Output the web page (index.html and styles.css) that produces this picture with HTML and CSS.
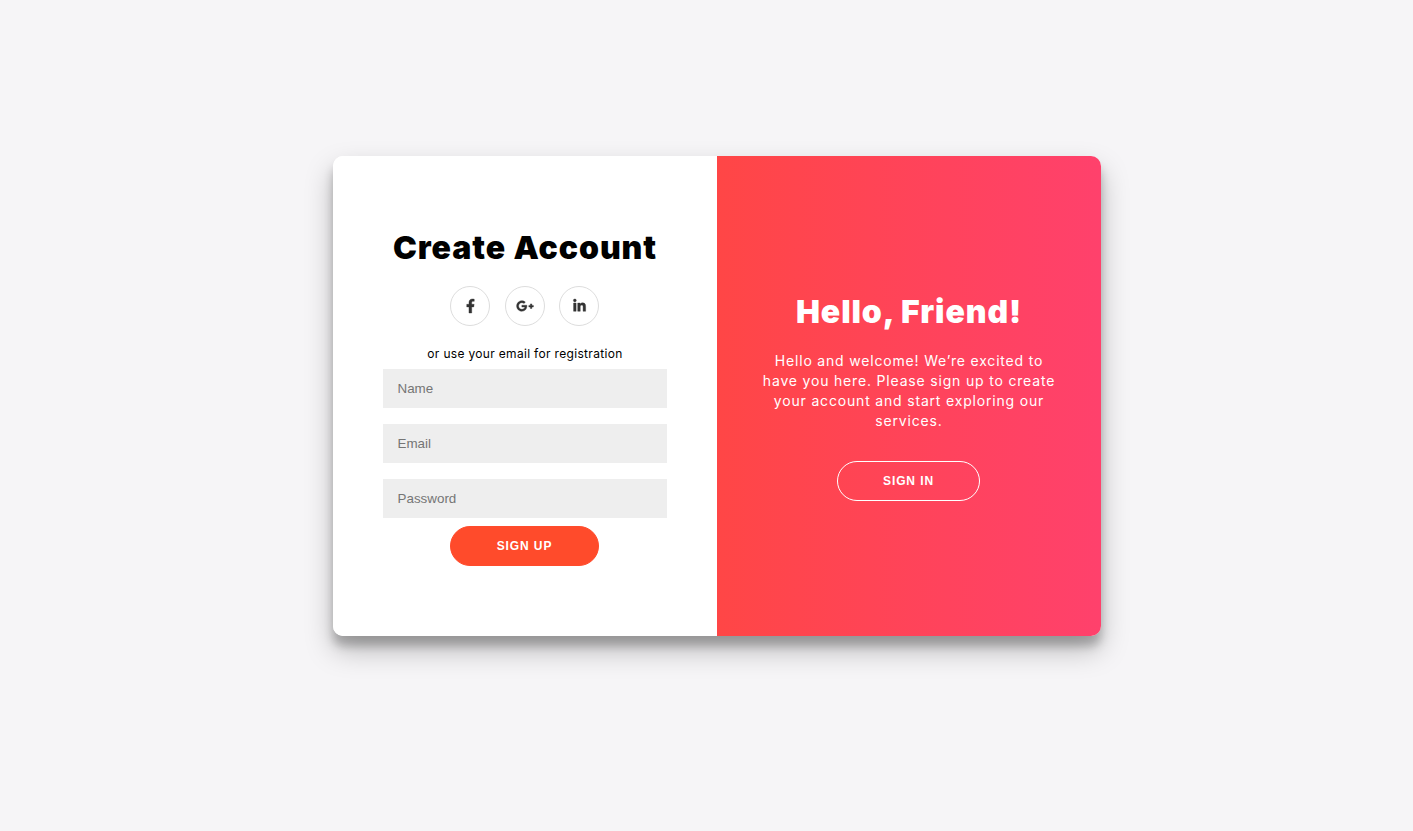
FILE: index.html
```html
<!DOCTYPE html>
<html lang="en">
<head>
<meta charset="utf-8">
<title>Create Account</title>
<link rel="stylesheet" href="styles.css">
</head>
<body>
<main class="card">
  <form class="panel form-panel">
    <h1 class="title title-dark">Create Account</h1>
    <div class="social">
      <a class="social-link" href="#" aria-label="Facebook">
        <svg class="icon-f" viewBox="0 0 320 512"><path d="M279.14 288l14.22-92.66h-88.91v-60.13c0-25.35 12.42-50.06 52.24-50.06h40.42V6.26S260.43 0 225.36 0c-73.22 0-121.08 44.38-121.08 124.72v70.62H22.89V288h81.39v224h100.17V288z"/></svg>
      </a>
      <a class="social-link" href="#" aria-label="Google Plus">
        <svg class="icon-g" viewBox="0 0 640 512"><path d="M386.061 228.496c1.834 9.692 3.143 19.384 3.143 31.956C389.204 370.205 315.599 448 204.8 448c-106.084 0-192-85.915-192-192s85.916-192 192-192c51.864 0 95.083 18.859 128.611 50.292l-52.126 50.03c-14.145-13.621-39.028-29.599-76.485-29.599-65.484 0-118.92 54.221-118.92 121.277 0 67.056 53.436 121.277 118.92 121.277 75.961 0 104.513-54.745 108.965-82.773H204.8v-66.009h181.261zm185.406 6.437V179.2h-56.001v55.733h-55.733v56.001h55.733v55.733h56.001v-55.733H627.2v-56.001h-55.733z"/></svg>
      </a>
      <a class="social-link" href="#" aria-label="LinkedIn">
        <svg class="icon-in" viewBox="0 0 448 512"><path d="M100.28 448H7.4V148.9h92.88zM53.79 108.1C24.09 108.1 0 83.5 0 53.8a53.79 53.79 0 0 1 107.58 0c0 29.7-24.1 54.3-53.79 54.3zM447.9 448h-92.68V302.4c0-34.7-.7-79.2-48.29-79.2-48.29 0-55.69 37.7-55.69 76.7V448h-92.78V148.9h89.08v40.8h1.3c12.4-23.5 42.69-48.3 87.88-48.3 94 0 111.28 61.9 111.28 142.3V448z"/></svg>
      </a>
    </div>
    <span class="hint">or use your email for registration</span>
    <input class="field" type="text" placeholder="Name">
    <input class="field" type="email" placeholder="Email">
    <input class="field" type="password" placeholder="Password">
    <button class="btn btn-solid" type="button">Sign Up</button>
  </form>
  <section class="panel overlay-panel">
    <h1 class="title title-light">Hello, Friend!</h1>
    <p class="lead">Hello and welcome! We’re excited to have you here. Please sign up to create your account and start exploring our services.</p>
    <button class="btn btn-ghost" type="button">Sign In</button>
  </section>
</main>
</body>
</html>
```
FILE: styles.css
```css
* { box-sizing: border-box; }
html, body { height: 100%; }
body {
  margin: 0;
  padding: 0 0 39px 21px;
  background: #f6f5f7;
  display: flex;
  align-items: center;
  justify-content: center;
  font-family: "Inter", "Liberation Sans", sans-serif;
}
.card {
  width: 768px;
  height: 480px;
  display: flex;
  border-radius: 10px;
  overflow: hidden;
  background: #fff;
  box-shadow: 0 14px 28px rgba(0,0,0,.25), 0 10px 10px rgba(0,0,0,.22);
}
.panel {
  flex: 0 0 50%;
  display: flex;
  flex-direction: column;
  align-items: center;
  justify-content: center;
  text-align: center;
}
.form-panel { padding: 0 50px; background: #fff; }
.overlay-panel { padding: 0 40px 1px; color: #fff; background: linear-gradient(to right, #ff4646, #ff416c); }
.title {
  margin: 0;
  font-size: 32px;
  font-weight: 900;
  line-height: 43px;
  white-space: nowrap;
}
.title-dark { color: #000; letter-spacing: .95px; }
.title-light { color: #fff; letter-spacing: .9px; }
.social {
  display: flex;
  gap: 14.5px;
  margin: 17px 1px 20px 0;
}
.social-link {
  width: 40px;
  height: 40px;
  border: 1px solid #ddd;
  border-radius: 50%;
  display: flex;
  align-items: center;
  justify-content: center;
}
.social-link svg { fill: #333; stroke: #333; stroke-width: 14; display: block; overflow: visible; }
.icon-f { width: 9px; height: 14px; }
.icon-g { width: 18px; height: 14px; }
.icon-in { width: 13px; height: 14px; }
.hint {
  font-size: 12px;
  line-height: 15px;
  letter-spacing: .32px;
  color: #000;
}
.field {
  width: 100%;
  height: 39px;
  margin: 8px 0;
  padding: 12px 15px 12px 14.5px;
  border: 0;
  background: #eee;
  font-family: "Liberation Sans", Arial, sans-serif;
  font-size: 13.4px;
}
.btn {
  height: 40px;
  margin-right: 1px;
  border-radius: 20px;
  font-family: "Liberation Sans", Arial, sans-serif;
  font-size: 12px;
  font-weight: 700;
  letter-spacing: .9px;
  text-transform: uppercase;
  color: #fff;
}
.btn-solid {
  width: 149px;
  border: 1px solid #ff4b2b;
  background: #ff4b2b;
}
.btn-ghost {
  width: 143px;
  border: 1px solid #fff;
  background: transparent;
}
.lead {
  margin: 18px 0 30px;
  font-size: 14px;
  font-weight: 400;
  line-height: 20px;
  letter-spacing: .82px;
}
```
